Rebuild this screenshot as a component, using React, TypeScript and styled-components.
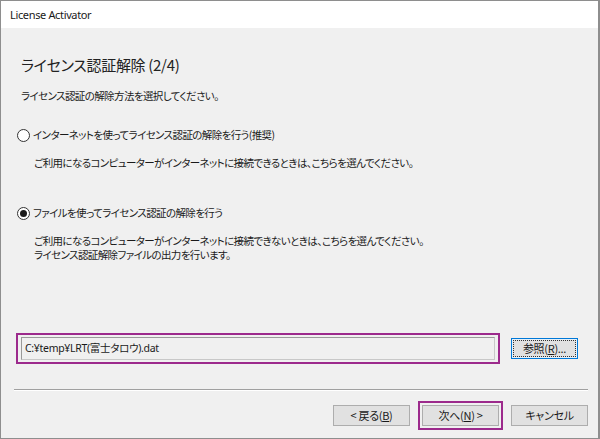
import React from "react";
import styled, { createGlobalStyle } from "styled-components";

const GlobalStyle = createGlobalStyle`
  html, body {
    margin: 0;
    padding: 0;
    background: #ffffff;
  }
  body {
    font-family: "Noto Sans", "Noto Sans CJK JP", sans-serif;
    color: #1a1a1a;
  }
`;

const jp = `"Noto Sans CJK JP", "Noto Sans", sans-serif`;

const App: React.FC = () => {
  return (
    <Window>
      <GlobalStyle />
      <TitleBar>License Activator</TitleBar>
      <Body>
        <Heading>
          ライセンス認証解除<Paren>(2/4)</Paren>
        </Heading>
        <Lead>ライセンス認証の解除方法を選択してください。</Lead>

        <Option>
          <Radio />
          <span>インターネットを使ってライセンス認証の解除を行う(推奨)</span>
        </Option>
        <Description>
          ご利用になるコンピューターがインターネットに接続できるときは、こちらを選んでください。
        </Description>

        <Option $gap={35}>
          <Radio $checked />
          <span>ファイルを使ってライセンス認証の解除を行う</span>
        </Option>
        <Description>
          ご利用になるコンピューターがインターネットに接続できないときは、こちらを選んでください。
          <br />
          ライセンス認証解除ファイルの出力を行います。
        </Description>

        <FileRow>
          <Highlight>
            <PathField>C:¥temp¥LRT(富士タロウ).dat</PathField>
          </Highlight>
          <BrowseButton>
            <FocusRect>
              参照(<u>R</u>)...
            </FocusRect>
          </BrowseButton>
        </FileRow>

        <Separator />

        <ButtonBar>
          <Button>
            &lt; 戻る(<u>B</u>)
          </Button>
          <Highlight $button>
            <Button>
              次へ(<u>N</u>) &gt;
            </Button>
          </Highlight>
          <Button>キャンセル</Button>
        </ButtonBar>
      </Body>
    </Window>
  );
};

const Window = styled.div`
  width: 600px;
  height: 439px;
  box-sizing: border-box;
  border: 1px solid #8e8e8e;
  border-right-width: 2px;
  background: #f0f0f0;
  display: flex;
  flex-direction: column;
  overflow: hidden;
`;

const TitleBar = styled.div`
  height: 27px;
  line-height: 27px;
  background: #ffffff;
  padding-left: 9px;
  font-size: 11px;
  letter-spacing: -0.35px;
  color: #1a1a1a;
`;

const Body = styled.div`
  flex: 1;
  display: flex;
  flex-direction: column;
  padding: 0 10px 0 12px;
  font-family: ${jp};
  font-feature-settings: "palt";
  font-size: 10.5px;
  letter-spacing: -0.6px;
  color: #1a1a1a;
`;

const Heading = styled.div`
  margin: 27px 0 0 8px;
  font-size: 15px;
  line-height: 20px;
  letter-spacing: -0.3px;
  color: #222;
`;

const Paren = styled.span`
  margin-left: 3px;
`;

const Lead = styled.div`
  margin: 13px 0 0 8px;
  line-height: 16px;
`;

const Option = styled.label<{ $gap?: number }>`
  display: flex;
  align-items: center;
  gap: 3px;
  margin: ${(p) => p.$gap ?? 23}px 0 0 4px;
  line-height: 16px;
`;

const Radio = styled.span<{ $checked?: boolean }>`
  width: 13px;
  height: 13px;
  box-sizing: border-box;
  border: 1px solid #333;
  border-radius: 50%;
  background: #ffffff;
  display: flex;
  align-items: center;
  justify-content: center;
  flex-shrink: 0;

  &::after {
    content: "";
    width: 7px;
    height: 7px;
    border-radius: 50%;
    background: ${(p) => (p.$checked ? "#1a1a1a" : "transparent")};
  }
`;

const Description = styled.div`
  margin: 13px 0 0 21px;
  line-height: 14px;
`;

const FileRow = styled.div`
  margin-top: 71px;
  display: flex;
  align-items: center;
  gap: 11px;
  padding-left: 3px;
`;

const Highlight = styled.div<{ $button?: boolean }>`
  border: 2px solid #9c2a8c;
  padding: ${(p) => (p.$button ? "2px" : "2px 3px")};
  display: flex;
  width: ${(p) => (p.$button ? "auto" : "484px")};
  box-sizing: ${(p) => (p.$button ? "content-box" : "border-box")};
`;

const PathField = styled.div`
  flex: 1;
  height: 23px;
  box-sizing: border-box;
  border: 1px solid #9a9a9a;
  border-bottom-color: #c8c8c8;
  border-right-color: #c8c8c8;
  background: #f0f0f0;
  padding-left: 3px;
  line-height: 21px;
  font-family: "Noto Sans", "Noto Sans CJK JP", sans-serif;
  font-size: 10.5px;
  letter-spacing: -0.3px;
`;

const BrowseButton = styled.div`
  width: 67px;
  height: 21px;
  box-sizing: border-box;
  border: 1px solid #0078d7;
  background: #e5f1fb;
  padding: 1px;
`;

const FocusRect = styled.div`
  height: 100%;
  box-sizing: border-box;
  border: 1px dotted #333;
  background: #e1e1e1;
  text-align: center;
  line-height: 15px;
  font-size: 11px;
  letter-spacing: -0.3px;
`;

const Separator = styled.div`
  margin: 25px 0 0 1px;
  height: 1px;
  background: #a0a0a0;
  border-bottom: 1px solid #ffffff;
`;

const ButtonBar = styled.div`
  margin-top: 10px;
  display: flex;
  justify-content: flex-end;
  align-items: center;
  gap: 8px;
`;

const Button = styled.div`
  width: 77px;
  height: 21px;
  box-sizing: border-box;
  border: 1px solid #adadad;
  background: #e1e1e1;
  text-align: center;
  line-height: 19px;
  font-size: 11px;
  letter-spacing: -0.3px;
`;

export default App;
